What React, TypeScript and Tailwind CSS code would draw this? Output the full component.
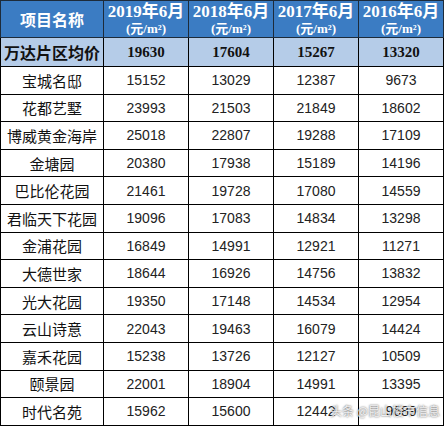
const years = ["2019年6月", "2018年6月", "2017年6月", "2016年6月"];

const rows: [string, number[]][] = [
  ["宝城名邸", [15152, 13029, 12387, 9673]],
  ["花都艺墅", [23993, 21503, 21849, 18602]],
  ["博威黄金海岸", [25018, 22807, 19288, 17109]],
  ["金塘园", [20380, 17938, 15189, 14196]],
  ["巴比伦花园", [21461, 19728, 17080, 14559]],
  ["君临天下花园", [19096, 17083, 14834, 13298]],
  ["金浦花园", [16849, 14991, 12921, 11271]],
  ["大德世家", [18644, 16926, 14756, 13832]],
  ["光大花园", [19350, 17148, 14534, 12954]],
  ["云山诗意", [22043, 19463, 16079, 14424]],
  ["嘉禾花园", [15238, 13726, 12127, 10509]],
  ["颐景园", [22001, 18904, 14991, 13395]],
  ["时代名苑", [15962, 15600, 12442, 9689]],
];

const avg = [19630, 17604, 15267, 13320];

export default function App() {
  return (
    <div className="relative w-[444px] h-[431px] bg-white overflow-hidden">
      <table className="border-collapse table-fixed w-[444px]">
        <colgroup>
          <col className="w-[103px]" />
          <col className="w-[85px]" />
          <col className="w-[85px]" />
          <col className="w-[85px]" />
          <col className="w-[85px]" />
        </colgroup>
        <thead>
          <tr className="bg-[#3b7cc3] h-[37px]">
            <th className="border border-[#1d2b3a] p-0 text-white text-[16px] font-bold font-['Noto_Sans_CJK_SC',sans-serif] leading-none">
              项目名称
            </th>
            {years.map((y) => (
              <th
                key={y}
                className="border border-[#1d2b3a] p-0 text-white font-bold font-['Liberation_Serif','Noto_Sans_CJK_SC',serif] leading-none"
              >
                <div className="text-[17px] leading-[19px]">{y}</div>
                <div className="text-[13px] leading-[15px] font-['Liberation_Serif','Noto_Sans_CJK_SC',serif]">
                  (元/m²)
                </div>
              </th>
            ))}
          </tr>
        </thead>
        <tbody>
          <tr className="bg-[#b5cce8] h-[29px]">
            <td className="border border-black p-0 text-center text-[16px] font-bold text-[#111] font-['Noto_Sans_CJK_SC',sans-serif] leading-none">
              万达片区均价
            </td>
            {avg.map((v, i) => (
              <td
                key={i}
                className="border border-black p-0 text-center text-[15px] font-bold text-[#111] font-['Liberation_Serif',serif] leading-none"
              >
                {v}
              </td>
            ))}
          </tr>
          {rows.map(([name, vals]) => (
            <tr key={name} className="h-[27.6px]">
              <td className="border border-black p-0 text-center text-[15px] text-[#111] font-['Noto_Sans_CJK_SC',sans-serif] leading-none">
                {name}
              </td>
              {vals.map((v, i) => (
                <td
                  key={i}
                  className="border border-black p-0 text-center text-[14px] text-[#222] font-['Liberation_Sans',sans-serif] leading-none"
                >
                  {v}
                </td>
              ))}
            </tr>
          ))}
        </tbody>
      </table>
      <div className="absolute left-[330px] top-[405px] text-[12px] text-white/85 font-['Noto_Sans_CJK_SC',sans-serif] leading-none [text-shadow:0_0_2px_rgba(0,0,0,0.8)]">
        头条 @昆山楼市信息
      </div>
    </div>
  );
}
